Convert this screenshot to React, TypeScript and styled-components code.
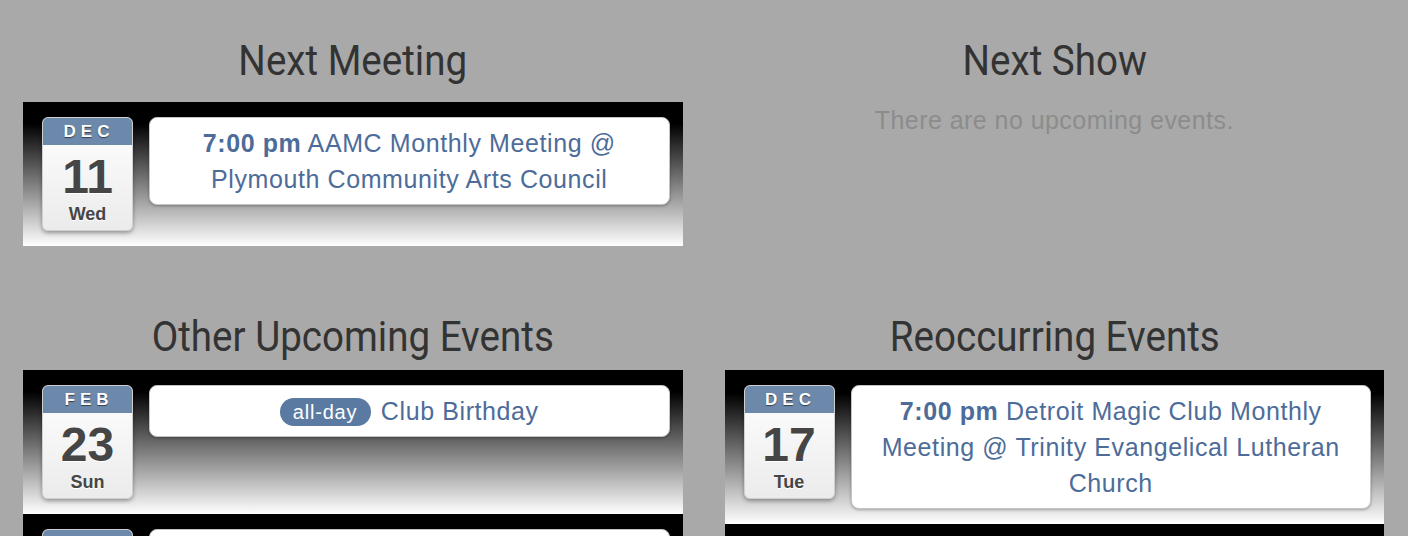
import React from "react";
import styled, { createGlobalStyle } from "styled-components";

const GlobalStyle = createGlobalStyle`
  html, body {
    margin: 0;
    padding: 0;
    background: #a9a9a9;
  }
  body {
    font-family: "Liberation Sans", Arial, Helvetica, sans-serif;
  }
`;

const Page = styled.div`
  display: grid;
  grid-template-columns: 1fr 1fr;
  column-gap: 42px;
  row-gap: 68px;
  padding: 38px 24px 0 23px;
`;

const Section = styled.section`
  display: flex;
  flex-direction: column;
  min-width: 0;
`;

const Heading = styled.h2<{ $gap: number }>`
  margin: 0 0 ${(p) => p.$gap}px;
  font-family: Roboto, "Noto Sans", sans-serif;
  font-weight: 400;
  font-size: 42px;
  line-height: 46px;
  color: #333333;
  text-align: center;
  transform: scaleX(0.918);
`;

const Empty = styled.p`
  margin: 0;
  font-size: 25px;
  line-height: 36px;
  letter-spacing: 0.45px;
  color: #8c8c8c;
  text-align: center;
`;

const List = styled.div`
  display: flex;
  flex-direction: column;
`;

const Item = styled.div`
  display: flex;
  align-items: flex-start;
  gap: 16px;
  padding: 15px 13px 15px 19px;
  background: linear-gradient(to bottom, #000000 0%, #000000 15%, #ffffff 100%);
`;

const DateBox = styled.div`
  flex: 0 0 91px;
  width: 91px;
  height: 114px;
  box-sizing: border-box;
  display: flex;
  flex-direction: column;
  border-radius: 6px;
  border: 1px solid #d0d0d0;
  background: linear-gradient(to bottom, #ffffff 0%, #ebebeb 100%);
  box-shadow: 0 2px 4px rgba(0, 0, 0, 0.35);
  overflow: hidden;
  text-align: center;
`;

const Month = styled.div`
  height: 27px;
  background: #6c88aa;
  color: #ffffff;
  font-weight: 700;
  font-size: 17px;
  line-height: 27px;
  letter-spacing: 5px;
  padding-left: 3px;
  text-shadow: 0 1px 1px rgba(0, 0, 0, 0.55);
`;

const Day = styled.div`
  margin-top: 8px;
  font-weight: 700;
  font-size: 48px;
  line-height: 48px;
  color: #454545;
  text-shadow: 0 1px 0 #ffffff;
`;

const Weekday = styled.div`
  margin-top: 3px;
  font-weight: 700;
  font-size: 18px;
  line-height: 20px;
  color: #454545;
  text-shadow: 0 1px 0 #ffffff;
`;

const EventBox = styled.div`
  flex: 1 1 auto;
  min-width: 0;
  padding: 7px 10px;
  background: #ffffff;
  border: 1px solid #c4c4c4;
  border-radius: 8px;
  box-shadow: 0 1px 3px rgba(0, 0, 0, 0.3);
  font-size: 25px;
  line-height: 36px;
  letter-spacing: 0.6px;
  color: #4d6c99;
  text-align: center;
`;

const Time = styled.strong`
  font-weight: 700;
`;

const AllDay = styled.span`
  display: inline-block;
  padding: 2px 14px 2px 13px;
  margin-right: 2px;
  border-radius: 14px;
  background: #5b7aa1;
  color: #ffffff;
  font-size: 20px;
  line-height: 24px;
  letter-spacing: 0.8px;
  vertical-align: 1px;
`;

type Ev = {
  month: string;
  day: string;
  weekday: string;
  time?: string;
  allDay?: boolean;
  title: string;
};

const EventRow = ({ ev }: { ev: Ev }) => (
  <Item>
    <DateBox>
      <Month>{ev.month}</Month>
      <Day>{ev.day}</Day>
      <Weekday>{ev.weekday}</Weekday>
    </DateBox>
    <EventBox>
      {ev.allDay ? <AllDay>all-day</AllDay> : null}
      {ev.time ? <Time>{ev.time}</Time> : null} {ev.title}
    </EventBox>
  </Item>
);

const nextMeeting: Ev[] = [
  {
    month: "DEC",
    day: "11",
    weekday: "Wed",
    time: "7:00 pm",
    title: "AAMC Monthly Meeting @ Plymouth Community Arts Council",
  },
];

const upcoming: Ev[] = [
  { month: "FEB", day: "23", weekday: "Sun", allDay: true, title: "Club Birthday" },
  {
    month: "FEB",
    day: "26",
    weekday: "Wed",
    time: "7:00 pm",
    title: "AAMC Monthly Meeting @ Plymouth Community Arts Council",
  },
];

const reoccurring: Ev[] = [
  {
    month: "DEC",
    day: "17",
    weekday: "Tue",
    time: "7:00 pm",
    title: "Detroit Magic Club Monthly Meeting @ Trinity Evangelical Lutheran Church",
  },
  {
    month: "JAN",
    day: "21",
    weekday: "Tue",
    time: "7:00 pm",
    title: "Detroit Magic Club Monthly Meeting @ Trinity Evangelical Lutheran Church",
  },
];

export default function App() {
  return (
    <>
      <GlobalStyle />
      <Page>
        <Section>
          <Heading $gap={18}>Next Meeting</Heading>
          <List>
            {nextMeeting.map((ev, i) => (
              <EventRow key={i} ev={ev} />
            ))}
          </List>
        </Section>
        <Section>
          <Heading $gap={18}>Next Show</Heading>
          <Empty>There are no upcoming events.</Empty>
        </Section>
        <Section>
          <Heading $gap={10}>Other Upcoming Events</Heading>
          <List>
            {upcoming.map((ev, i) => (
              <EventRow key={i} ev={ev} />
            ))}
          </List>
        </Section>
        <Section>
          <Heading $gap={10}>Reoccurring Events</Heading>
          <List>
            {reoccurring.map((ev, i) => (
              <EventRow key={i} ev={ev} />
            ))}
          </List>
        </Section>
      </Page>
    </>
  );
}
